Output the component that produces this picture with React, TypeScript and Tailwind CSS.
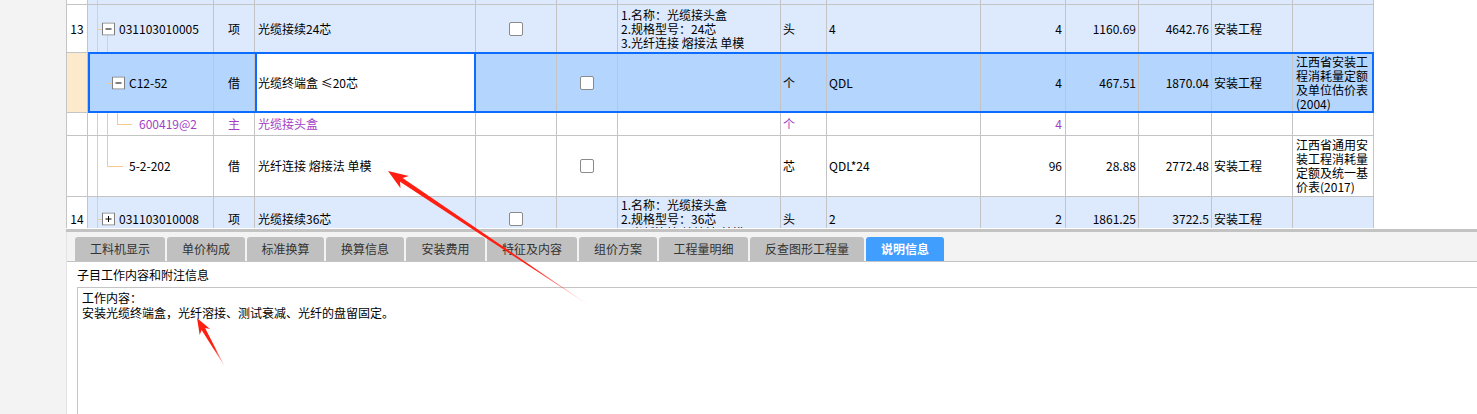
import type { ReactNode } from "react";

const GRID =
  "relative grid grid-cols-[21px_126px_41px_221px_81px_61px_163px_46px_154px_85px_73px_73px_81px_81px]";

function Cell({ className = "", children }: { className?: string; children?: ReactNode }) {
  return (
    <div className={`relative flex items-center overflow-hidden border-r border-b border-[#c4c4c4] ${className}`}>
      {children}
    </div>
  );
}

function Check() {
  return <span className="block w-[14px] h-[14px] rounded-[2px] border border-[#8a8a8a] bg-white" />;
}

function TreeBox({ open, className }: { open: boolean; className: string }) {
  return (
    <svg
      width="13"
      height="13"
      viewBox="0 0 13 13"
      className={`absolute top-1/2 -translate-y-1/2 ${className}`}
    >
      <rect x="0.5" y="0.5" width="12" height="12" fill="#fff" stroke="#808080" />
      <path d="M3.5 6.5h6" stroke="#000" />
      {!open && <path d="M6.5 3.5v6" stroke="#000" />}
    </svg>
  );
}

function arrowPoints(tip: [number, number], tail: [number, number], head: number, half: number, shaft: number) {
  const dx = tail[0] - tip[0];
  const dy = tail[1] - tip[1];
  const len = Math.hypot(dx, dy);
  const ux = dx / len;
  const uy = dy / len;
  const at = (d: number, w: number) =>
    `${(tip[0] + ux * d - uy * w).toFixed(1)},${(tip[1] + uy * d + ux * w).toFixed(1)}`;
  return [at(0, 0), at(head, half), at(head * 0.8, shaft), `${tail[0]},${tail[1]}`, at(head * 0.8, -shaft), at(head, -half)].join(" ");
}

const tabs = ["工料机显示", "单价构成", "标准换算", "换算信息", "安装费用", "特征及内容", "组价方案", "工程量明细", "反查图形工程量", "说明信息"];
const tabWidths = ["w-[90px]", "w-[78px]", "w-[77px]", "w-[78px]", "w-[79px]", "w-[90px]", "w-[78px]", "w-[89px]", "w-[114px]", "w-[78px]"];

const blue = "bg-[#dde9fd]";
const sel = "bg-[#b4d5fe]";
const line = "bg-[#f6c98f]";

export default function App() {
  return (
    <div className="relative flex w-[1477px] h-[414px] overflow-hidden bg-white text-[12px] text-black font-['Noto_Sans_CJK_SC',sans-serif]">
      <div className="w-[66px] shrink-0 bg-[#f3f3f3]" />

      <div className="flex flex-1 flex-col min-w-0">
        {/* grid */}
        <div className="h-[228px] shrink-0 overflow-hidden border-l border-[#c4c4c4]">
          {/* row above, cut off */}
          <div className={`${GRID} h-[5px]`}>
            <Cell className="bg-white" />
            <Cell className={blue}>
              <span className={`absolute left-[9px] top-0 -bottom-px w-px ${line}`} />
            </Cell>
            {Array.from({ length: 12 }).map((_, i) => (
              <Cell key={i} className={blue} />
            ))}
          </div>

          {/* 13 */}
          <div className={`${GRID} h-[48px]`}>
            <Cell className="justify-center bg-white">13</Cell>
            <Cell className={blue}>
              <span className={`absolute left-[9px] top-0 -bottom-px w-px ${line}`} />
              <span className={`absolute left-[9px] top-1/2 w-[5px] h-px ${line}`} />
              <span className={`absolute left-[19px] top-[calc(50%+6px)] -bottom-px w-px ${line}`} />
              <TreeBox open className="left-[14px]" />
              <span className="pl-[31px]">031103010005</span>
            </Cell>
            <Cell className={`justify-center ${blue}`}>项</Cell>
            <Cell className={`pl-[3px] ${blue}`}>光缆接续24芯</Cell>
            <Cell className={`justify-center ${blue}`}>
              <Check />
            </Cell>
            <Cell className={blue} />
            <Cell className={`pl-[3px] ${blue}`}>
              <div className="leading-[14px] whitespace-nowrap">
                <div>1.名称：光缆接头盒</div>
                <div>2.规格型号：24芯</div>
                <div>3.光纤连接 熔接法 单模</div>
              </div>
            </Cell>
            <Cell className={`pl-[2px] ${blue}`}>头</Cell>
            <Cell className={`pl-[2px] ${blue}`}>4</Cell>
            <Cell className={`justify-end pr-[3px] ${blue}`}>4</Cell>
            <Cell className={`justify-end pr-[2px] ${blue}`}>1160.69</Cell>
            <Cell className={`justify-end pr-[2px] ${blue}`}>4642.76</Cell>
            <Cell className={`pl-[2px] ${blue}`}>安装工程</Cell>
            <Cell className={blue} />
          </div>

          {/* selected C12-52 */}
          <div className={`${GRID} h-[60px]`}>
            <Cell className="bg-[#fde9cc]" />
            <Cell className={sel}>
              <span className={`absolute left-[9px] top-0 -bottom-px w-px ${line}`} />
              <span className={`absolute left-[19px] top-0 -bottom-px w-px ${line}`} />
              <span className={`absolute left-[19px] top-1/2 w-[5px] h-px ${line}`} />
              <span className={`absolute left-[29px] top-[calc(50%+6px)] -bottom-px w-px ${line}`} />
              <TreeBox open className="left-[24px]" />
              <span className="pl-[41px]">C12-52</span>
            </Cell>
            <Cell className={`justify-center ${sel}`}>借</Cell>
            <Cell className="pl-[3px] bg-white">光缆终端盒 ≤20芯</Cell>
            <Cell className={sel} />
            <Cell className={`justify-center ${sel}`}>
              <Check />
            </Cell>
            <Cell className={sel} />
            <Cell className={`pl-[2px] ${sel}`}>个</Cell>
            <Cell className={`pl-[2px] ${sel}`}>QDL</Cell>
            <Cell className={`justify-end pr-[3px] ${sel}`}>4</Cell>
            <Cell className={`justify-end pr-[2px] ${sel}`}>467.51</Cell>
            <Cell className={`justify-end pr-[2px] ${sel}`}>1870.04</Cell>
            <Cell className={`pl-[2px] ${sel}`}>安装工程</Cell>
            <Cell className={`pl-[3px] ${sel}`}>
              <div className="leading-[14px] whitespace-nowrap">
                <div>江西省安装工</div>
                <div>程消耗量定额</div>
                <div>及单位估价表</div>
                <div>(2004)</div>
              </div>
            </Cell>
            <div className="pointer-events-none absolute left-[21px] top-[-1px] h-[61px] w-[1286px] border-2 border-[#0b6cff]" />
            <div className="pointer-events-none absolute left-[188px] top-[-1px] h-[61px] w-[221px] border-2 border-[#0b6cff]" />
          </div>

          {/* 600419@2 */}
          <div className={`${GRID} h-[23px] text-[#a33fc6]`}>
            <Cell className="bg-white" />
            <Cell className="bg-white">
              <span className={`absolute left-[9px] top-0 -bottom-px w-px ${line}`} />
              <span className={`absolute left-[19px] top-0 -bottom-px w-px ${line}`} />
              <span className={`absolute left-[29px] top-0 h-1/2 w-px ${line}`} />
              <span className={`absolute left-[29px] top-1/2 w-[15px] h-px ${line}`} />
              <span className="pl-[51px]">600419@2</span>
            </Cell>
            <Cell className="justify-center">主</Cell>
            <Cell className="pl-[3px]">光缆接头盒</Cell>
            <Cell />
            <Cell />
            <Cell />
            <Cell className="pl-[2px]">个</Cell>
            <Cell />
            <Cell className="justify-end pr-[3px]">4</Cell>
            <Cell />
            <Cell />
            <Cell />
            <Cell />
          </div>

          {/* 5-2-202 */}
          <div className={`${GRID} h-[61px]`}>
            <Cell className="bg-white" />
            <Cell>
              <span className={`absolute left-[9px] top-0 -bottom-px w-px ${line}`} />
              <span className={`absolute left-[19px] top-0 h-1/2 w-px ${line}`} />
              <span className={`absolute left-[19px] top-1/2 w-[16px] h-px ${line}`} />
              <span className="pl-[41px]">5-2-202</span>
            </Cell>
            <Cell className="justify-center">借</Cell>
            <Cell className="pl-[3px]">光纤连接 熔接法 单模</Cell>
            <Cell />
            <Cell className="justify-center">
              <Check />
            </Cell>
            <Cell />
            <Cell className="pl-[2px]">芯</Cell>
            <Cell className="pl-[2px]">QDL*24</Cell>
            <Cell className="justify-end pr-[3px]">96</Cell>
            <Cell className="justify-end pr-[2px]">28.88</Cell>
            <Cell className="justify-end pr-[2px]">2772.48</Cell>
            <Cell className="pl-[2px]">安装工程</Cell>
            <Cell className="pl-[3px]">
              <div className="leading-[14px] whitespace-nowrap">
                <div>江西省通用安</div>
                <div>装工程消耗量</div>
                <div>定额及统一基</div>
                <div>价表(2017)</div>
              </div>
            </Cell>
          </div>

          {/* 14 */}
          <div className={`${GRID} h-[44px]`}>
            <Cell className="justify-center bg-white">14</Cell>
            <Cell className={blue}>
              <span className={`absolute left-[9px] top-0 -bottom-px w-px ${line}`} />
              <span className={`absolute left-[9px] top-1/2 w-[5px] h-px ${line}`} />
              <TreeBox open={false} className="left-[14px]" />
              <span className="pl-[31px]">031103010008</span>
            </Cell>
            <Cell className={`justify-center ${blue}`}>项</Cell>
            <Cell className={`pl-[3px] ${blue}`}>光缆接续36芯</Cell>
            <Cell className={`justify-center ${blue}`}>
              <Check />
            </Cell>
            <Cell className={blue} />
            <Cell className={`pl-[3px] ${blue}`}>
              <div className="leading-[14px] whitespace-nowrap">
                <div>1.名称：光缆接头盒</div>
                <div>2.规格型号：36芯</div>
                <div>3.光纤连接 熔接法 单模</div>
              </div>
            </Cell>
            <Cell className={`pl-[2px] ${blue}`}>头</Cell>
            <Cell className={`pl-[2px] ${blue}`}>2</Cell>
            <Cell className={`justify-end pr-[3px] ${blue}`}>2</Cell>
            <Cell className={`justify-end pr-[2px] ${blue}`}>1861.25</Cell>
            <Cell className={`justify-end pr-[2px] ${blue}`}>3722.5</Cell>
            <Cell className={`pl-[2px] ${blue}`}>安装工程</Cell>
            <Cell className={blue} />
          </div>
        </div>

        <div className="h-px shrink-0 bg-white" />
        <div className="h-[3px] shrink-0 bg-[#c3c3c3]" />

        {/* bottom panel */}
        <div className="flex flex-1 flex-col border-l border-[#e2e2e2]">
          <div className="flex h-[30px] shrink-0 items-end gap-[2px] border-b border-[#c4c4c4] bg-[#f3f3f3] pl-[8px]">
            {tabs.map((t, i) => (
              <div
                key={t}
                className={`flex h-[24px] items-center justify-center rounded-t-[3px] ${tabWidths[i]} ${
                  i === tabs.length - 1 ? "bg-[#409eff] font-bold text-white" : "bg-[#c0c0c0] text-[#333]"
                }`}
              >
                {t}
              </div>
            ))}
          </div>
          <div className="flex h-[25px] shrink-0 items-center pl-[10px]">子目工作内容和附注信息</div>
          <div className="ml-[10px] flex-1 border-l border-t border-[#c4c4c4] pl-[4px] pt-[2px] leading-[15px]">
            <div>工作内容：</div>
            <div>安装光缆终端盒，光纤溶接、测试衰减、光纤的盘留固定。</div>
          </div>
        </div>
      </div>

      {/* annotation arrows */}
      <svg className="pointer-events-none absolute inset-0" width="1477" height="414" viewBox="0 0 1477 414">
        <defs>
          <linearGradient id="a1" gradientUnits="userSpaceOnUse" x1="388" y1="171" x2="590" y2="306">
            <stop offset="0" stopColor="#ff1f12" />
            <stop offset="0.7" stopColor="#ff1f12" />
            <stop offset="1" stopColor="#ff1f12" stopOpacity="0.1" />
          </linearGradient>
          <linearGradient id="a2" gradientUnits="userSpaceOnUse" x1="197" y1="318" x2="225" y2="367">
            <stop offset="0" stopColor="#ff1f12" />
            <stop offset="0.6" stopColor="#ff1f12" />
            <stop offset="1" stopColor="#ff1f12" stopOpacity="0.15" />
          </linearGradient>
        </defs>
        <polygon points={arrowPoints([388, 171], [590, 306], 20, 7.5, 2.3)} fill="url(#a1)" />
        <polygon points={arrowPoints([197, 318], [225, 367], 16, 6, 2)} fill="url(#a2)" />
      </svg>
    </div>
  );
}
